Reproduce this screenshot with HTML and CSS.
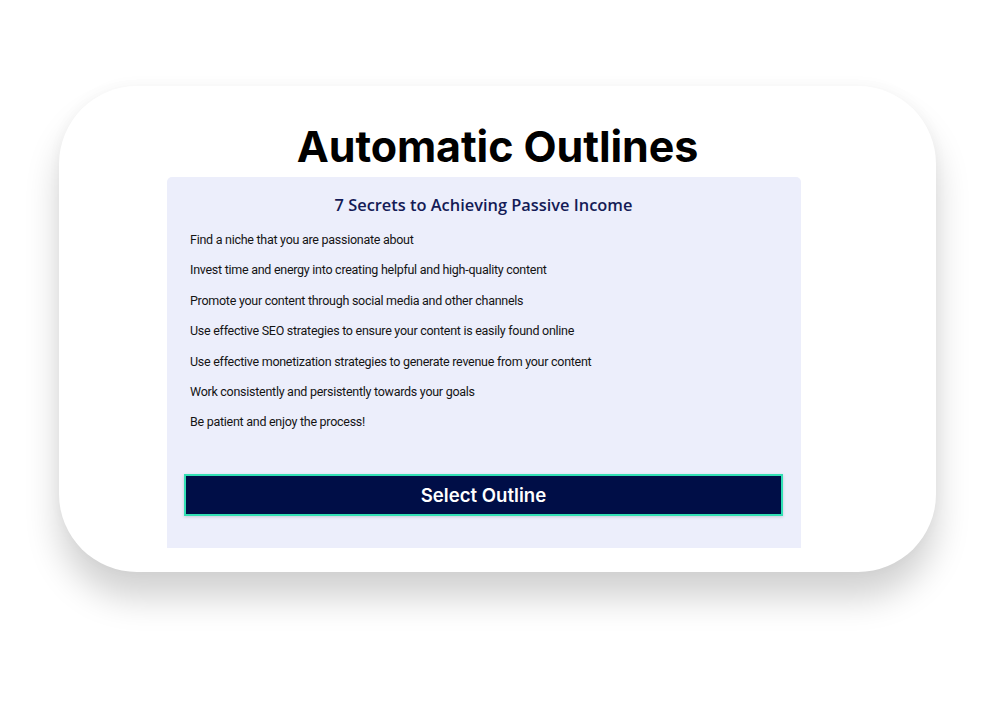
FILE: index.html
```html
<!DOCTYPE html>
<html>
<head>
<meta charset="utf-8">
<link rel="stylesheet" href="styles.css">
</head>
<body>
<div class="stage">
  <div class="card">
    <h1 class="title">Automatic Outlines</h1>
    <div class="panel">
      <h2 class="subtitle">7 Secrets to Achieving Passive Income</h2>
      <ul class="items">
        <li>Find a niche that you are passionate about</li>
        <li>Invest time and energy into creating helpful and high-quality content</li>
        <li>Promote your content through social media and other channels</li>
        <li>Use effective SEO strategies to ensure your content is easily found online</li>
        <li>Use effective monetization strategies to generate revenue from your content</li>
        <li>Work consistently and persistently towards your goals</li>
        <li>Be patient and enjoy the process!</li>
      </ul>
      <button class="select">Select Outline</button>
    </div>
  </div>
</div>
</body>
</html>
```
FILE: styles.css
```css
html, body {
  margin: 0;
  padding: 0;
  background: #ffffff;
}
.stage {
  width: 993px;
  height: 712px;
  padding: 86px 0 0 59px;
  box-sizing: border-box;
  overflow: hidden;
}
.card {
  width: 877px;
  height: 486px;
  box-sizing: border-box;
  background: #ffffff;
  border-radius: 78px;
  box-shadow: 0 26px 34px rgba(0, 0, 0, 0.18), 0 -2px 14px rgba(0, 0, 0, 0.03);
  padding-top: 34px;
}
.title {
  margin: 0;
  text-align: center;
  font-family: "Inter", "Open Sans", sans-serif;
  font-weight: 700;
  font-size: 43px;
  line-height: 52px;
  letter-spacing: -0.1px;
  color: #000000;
}
.panel {
  margin: 5px 0 0 108px;
  width: 634px;
  height: 371px;
  box-sizing: border-box;
  background: #eceefb;
  border-radius: 5px 5px 0 0;
  padding: 16px 18px 0 17px;
}
.subtitle {
  margin: 0;
  text-align: center;
  font-family: "Open Sans", "Noto Sans", sans-serif;
  font-weight: 600;
  font-size: 16.4px;
  line-height: 24px;
  color: #141b56;
}
.items {
  list-style: none;
  margin: 15px 0 0 0;
  padding: 0 0 0 6px;
  font-family: "Roboto", sans-serif;
  font-weight: 400;
  font-size: 12.5px;
  letter-spacing: -0.27px;
  color: #141414;
}
.items li {
  height: 30.4px;
  line-height: 16px;
}
.select {
  display: block;
  margin-top: 29px;
  width: 599px;
  height: 42px;
  background: #000e47;
  border: 2px solid #33e0b4;
  box-shadow: 0 1px 3px rgba(0, 0, 0, 0.15);
  color: #ffffff;
  font-family: "Inter", "Open Sans", sans-serif;
  font-weight: 600;
  font-size: 18.6px;
  padding: 0;
  cursor: pointer;
}
```
